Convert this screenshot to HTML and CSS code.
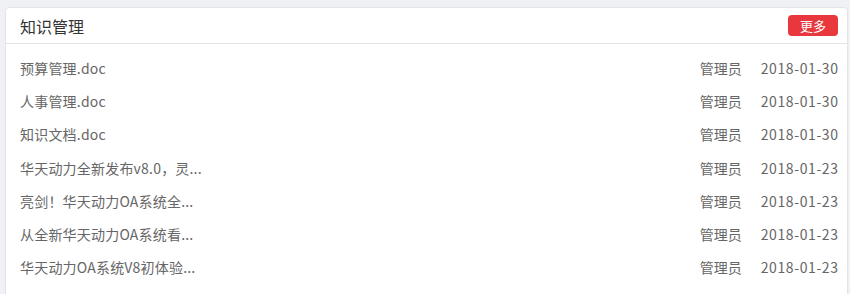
FILE: index.html
```html
<!DOCTYPE html>
<html lang="zh-CN">
<head>
  <meta charset="UTF-8">
  <title>知识管理</title>
  <link rel="stylesheet" href="styles.css">
</head>
<body>
  <div class="panel">
    <div class="panel-head">
      <span class="panel-title">知识管理</span>
      <a class="more-btn" href="#">更多</a>
    </div>
    <ul class="doc-list">
      <li><span class="doc-name">预算管理.doc</span><span class="doc-author">管理员</span><span class="doc-date">2018-01-30</span></li>
      <li><span class="doc-name">人事管理.doc</span><span class="doc-author">管理员</span><span class="doc-date">2018-01-30</span></li>
      <li><span class="doc-name">知识文档.doc</span><span class="doc-author">管理员</span><span class="doc-date">2018-01-30</span></li>
      <li><span class="doc-name">华天动力全新发布v8.0，灵...</span><span class="doc-author">管理员</span><span class="doc-date">2018-01-23</span></li>
      <li><span class="doc-name">亮剑！华天动力OA系统全...</span><span class="doc-author">管理员</span><span class="doc-date">2018-01-23</span></li>
      <li><span class="doc-name">从全新华天动力OA系统看...</span><span class="doc-author">管理员</span><span class="doc-date">2018-01-23</span></li>
      <li><span class="doc-name">华天动力OA系统V8初体验...</span><span class="doc-author">管理员</span><span class="doc-date">2018-01-23</span></li>
    </ul>
  </div>
</body>
</html>
```

FILE: styles.css
```css
body {
  margin: 0;
  padding: 7px 2px 0 5px;
  background-color: #f0f1f4;
  font-family: "Noto Sans CJK SC", "Noto Sans", sans-serif;
  overflow: hidden;
}
.panel {
  background-color: #ffffff;
  border: 1px solid #e3e4e8;
  border-radius: 4px;
  height: 320px;
}
.panel-head {
  display: flex;
  align-items: center;
  justify-content: space-between;
  height: 35px;
  padding: 0 9px 0 14px;
  border-bottom: 1px solid #e3e4e8;
}
.panel-title {
  font-size: 16px;
  color: #333333;
}
.more-btn {
  display: inline-block;
  width: 50px;
  height: 21px;
  line-height: 21px;
  text-align: center;
  background-color: #e8383d;
  color: #ffffff;
  font-size: 13px;
  border-radius: 4px;
  text-decoration: none;
}
.doc-list {
  list-style: none;
  margin: 0;
  padding: 7px 9px 0 14px;
}
.doc-list li {
  display: flex;
  align-items: center;
  height: 33.3px;
  font-size: 14px;
  color: #666666;
}
.doc-name {
  flex: 1;
  letter-spacing: 0.2px;
}
.doc-author {
  margin-right: 19px;
}
.doc-date {
  letter-spacing: 0.6px;
  margin-right: -0.6px;
}
```
